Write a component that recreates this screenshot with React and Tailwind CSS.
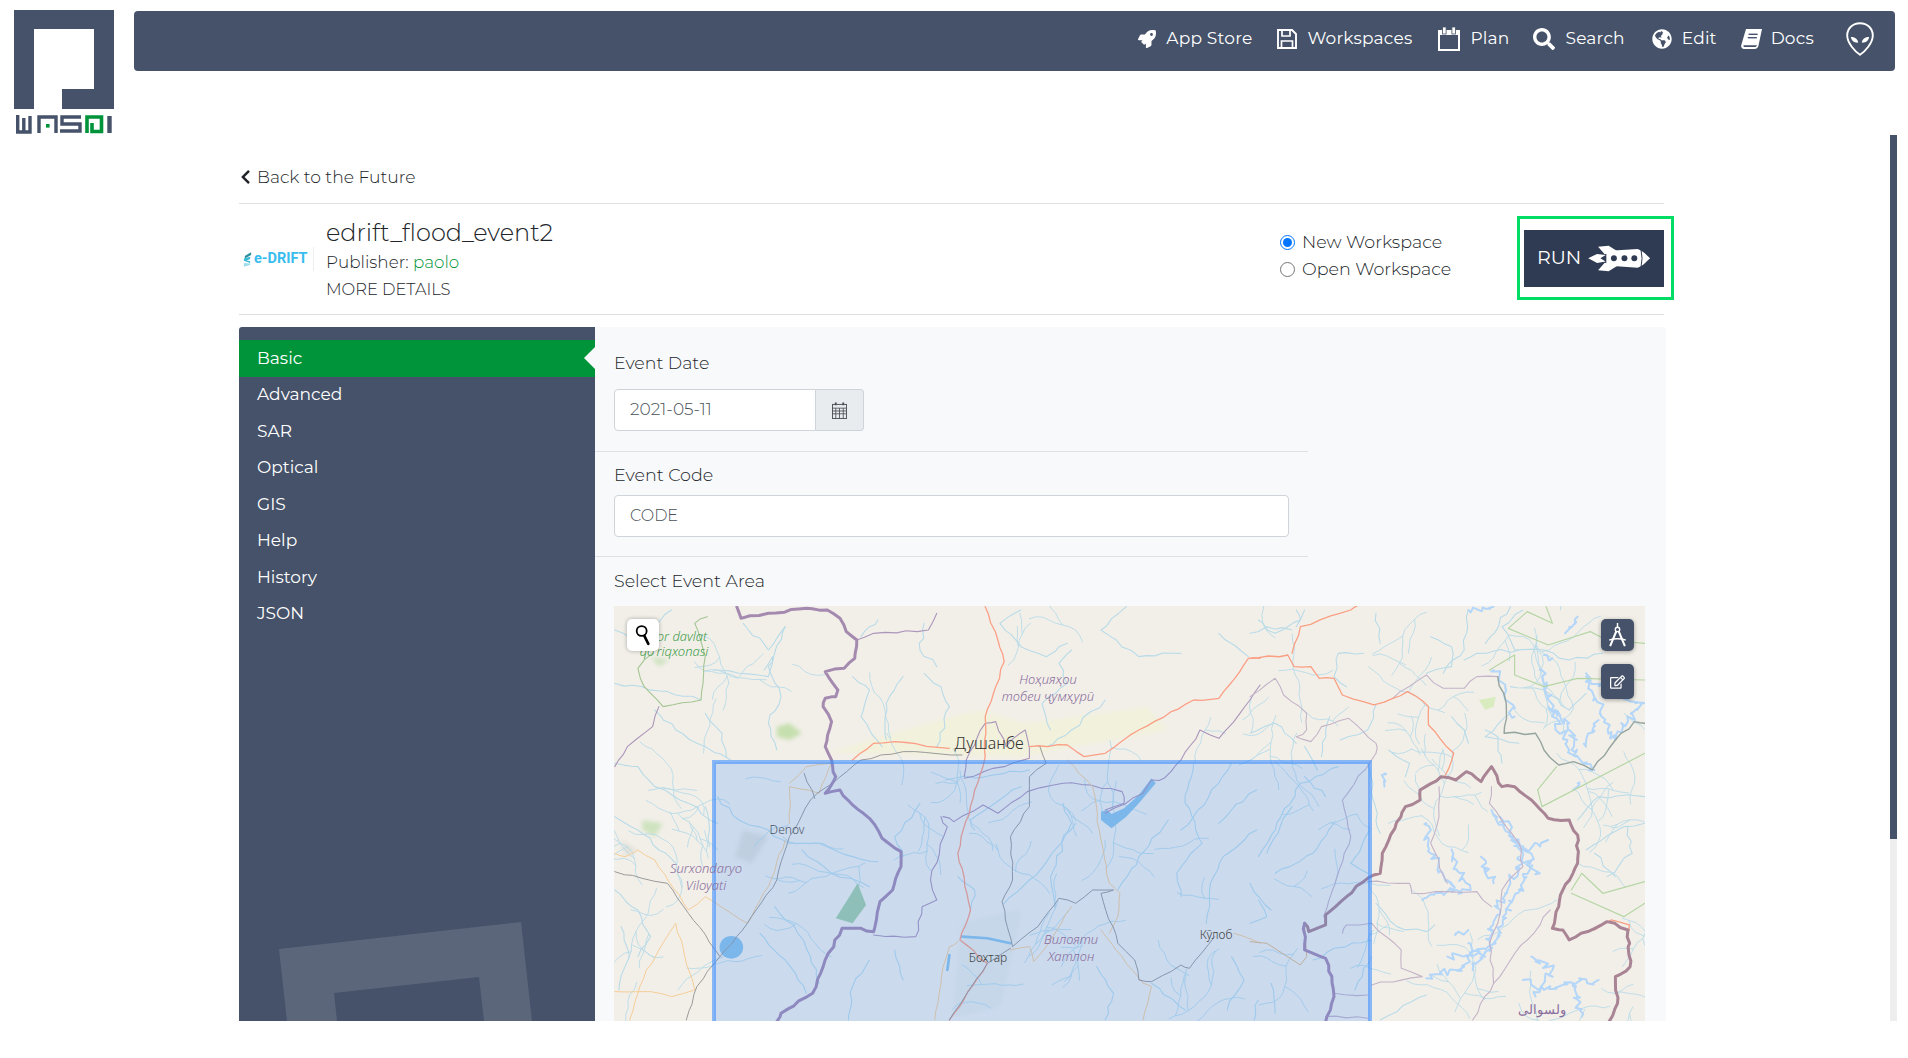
import React from "react";
import { FaRocket, FaSearch, FaGlobeAmericas, FaChevronLeft, FaRegEdit } from "react-icons/fa";

const font = { fontFamily: "Montserrat, Inter, 'Noto Sans', sans-serif" };

function Logo() {
  return (
    <svg viewBox="0 0 100 124" className="w-[100px] h-[124px] block shrink-0">
      <path d="M0 0H100V99H48V79H80V19H20V99H0Z" fill="#455269" />
      <g fill="none" stroke="#455269" strokeWidth="3.4">
        <path d="M3.7 105V122H16V106M9.8 122V108" />
        <path d="M25 123V107H42V123" />
        <path d="M67 107H48V114H66V121H46" />
        <path d="M95.5 106V123" strokeWidth="4.4" />
      </g>
      <rect x="32" y="114" width="3.6" height="3.6" fill="#00943a" />
      <path d="M73 123V107H87.5V121.5H78V113" fill="none" stroke="#00943a" strokeWidth="3.6" />
    </svg>
  );
}

function Book({ className }) {
  return (
    <svg viewBox="0 0 22 20" className={className} fill="white">
      <path d="M5 0H21L17.5 16.5C17 18.6 15.8 20 13.5 20H3C1 20 -.3 18.3 .3 16Z" />
      <path d="M2.5 16.2C2.2 17.2 2.8 18 3.8 18H13.8C15 18 15.6 17.3 16 16.2Z" fill="#455269" />
      <rect x="7.6" y="4.6" width="9" height="1.4" fill="#455269" />
      <rect x="6.8" y="8" width="9" height="1.4" fill="#455269" />
    </svg>
  );
}

function Alien() {
  return (
    <svg viewBox="0 0 28 34" className="w-[28px] h-[34px]">
      <path d="M14 1.2C6.5 1.2 1.2 6.5 1.2 13.5 1.2 21 9 29.5 14 32.8 19 29.5 26.8 21 26.8 13.5 26.8 6.5 21.5 1.2 14 1.2Z" fill="none" stroke="white" strokeWidth="1.9" />
      <path d="M4.8 15C8.6 14.6 11.8 17 12.2 20.6 8.4 21 5.4 18.8 4.8 15Z M23.2 15C19.4 14.6 16.2 17 15.8 20.6 19.6 21 22.6 18.8 23.2 15Z" fill="white" />
    </svg>
  );
}

function Floppy() {
  return (
    <svg viewBox="0 0 20 20" className="w-[20px] h-[20px]" fill="none" stroke="white" strokeWidth="1.9">
      <path d="M1 1H15L19 5V19H1Z" />
      <path d="M5 1V7H13V1" strokeWidth="1.7" />
      <path d="M4.5 19V12H15.5V19" strokeWidth="1.7" />
    </svg>
  );
}

function Cal() {
  return (
    <svg viewBox="0 0 22 24" className="w-[22px] h-[24px]">
      <rect x="1" y="4" width="20" height="19" fill="none" stroke="white" strokeWidth="2" />
      <rect x="1" y="4" width="20" height="4" fill="white" />
      <rect x="4.5" y="0" width="3.6" height="7" fill="white" stroke="#455269" strokeWidth=".8" />
      <rect x="13.9" y="0" width="3.6" height="7" fill="white" stroke="#455269" strokeWidth=".8" />
    </svg>
  );
}

function Compass() {
  return (
    <svg viewBox="0 0 20 26" className="w-[19px] h-[24px]" fill="none" stroke="white">
      <path d="M10 0V4.5" strokeWidth="1.6" />
      <circle cx="10" cy="7" r="2.4" strokeWidth="1.5" />
      <path d="M8.6 9.2 2 25M11.4 9.2 18 25" strokeWidth="2.2" />
      <path d="M1 18.5C6 16.5 14 16.5 19 18.5" strokeWidth="1.5" />
    </svg>
  );
}

function NavItem({ icon, label, gap = "gap-[10px]", extra = "" }) {
  return (
    <div className={`flex items-center ${gap} ${extra}`}>
      {icon}
      <span className="text-[17px] text-white tracking-[0.2px]">{label}</span>
    </div>
  );
}

function Navbar() {
  return (
    <div className="ml-[20px] mt-[1px] w-[1761px] h-[60px] bg-[#455269] rounded-[4px] flex items-center justify-end gap-[25px] pr-[21px] pb-[4px]">
      <NavItem icon={<FaRocket className="w-[18px] h-[18px] text-white" />} label="App Store" />
      <NavItem icon={<Floppy />} label="Workspaces" />
      <NavItem icon={<Cal />} label="Plan" extra="ml-[1px]" />
      <NavItem icon={<FaSearch className="w-[22px] h-[22px] text-white" />} label="Search" extra="ml-[-1px]" />
      <NavItem icon={<FaGlobeAmericas className="w-[20px] h-[20px] text-white" />} label="Edit" extra="ml-[2px]" />
      <NavItem icon={<Book className="w-[22px] h-[20px]" />} label="Docs" gap="gap-[8px]" extra="ml-[-1px]" />
      <div className="ml-[7px]"><Alien /></div>
    </div>
  );
}

function RunRocket() {
  return (
    <svg viewBox="235 110 190 82" className="w-[63px] h-[27px]">
      <path d="M290 128 385 122C400 128 408 136 413 141L423 150 413 159C408 165 400 173 385 179L290 172Z" fill="white" />
      <path d="M265 115 297 112 325 130 285 138Z M265 187 297 190 325 172 285 164Z" fill="white" />
      <path d="M235 150 262 137 288 140 272 150 288 160 262 165Z" fill="white" />
      <circle cx="313" cy="150" r="9" fill="#2f3b52" />
      <circle cx="345" cy="150" r="9" fill="#2f3b52" />
      <circle cx="375" cy="150" r="9" fill="#2f3b52" />
      <path d="M395 122Q402 150 395 180" stroke="#2f3b52" strokeWidth="3" fill="none" />
    </svg>
  );
}

function TitleRow() {
  return (
    <div className="h-[111px] border-b border-[#dfdfdf] flex items-center">
      <div className="w-[71px] ml-[4px] mr-[12px] h-[24px] flex items-center gap-[2px] border-r border-[#eeeeee]">
        <svg viewBox="0 0 10 16" className="w-[9px] h-[15px] shrink-0">
          <path d="M2 4 9 0V3L2 7Z" fill="#2a8f9c" />
          <path d="M1 7 8 5V7.5L4 9 8 10V12L1 9.5Z" fill="#38b9d8" />
          <path d="M1 12 8 12.5V14L1 16Z" fill="#9fdcee" />
        </svg>
        <span className="text-[14.5px] font-bold text-[#38bdee]" style={{ fontFamily: "Roboto, sans-serif" }}>e-DRIFT</span>
      </div>
      <div className="flex flex-col pt-[2px]">
        <div className="text-[24px] leading-[30px] font-light text-[#212529] mt-[-2px]">edrift_flood_event2</div>
        <div className="text-[16.8px] leading-[24px] font-light text-[#212529] mt-[2px]">Publisher: <span className="text-[#00943a]">paolo</span></div>
        <div className="text-[16.3px] leading-[24px] font-light text-[#212529] mt-[3px]">MORE DETAILS</div>
      </div>
      <div className="flex-1" />
      <div className="flex flex-col gap-[4px] mr-[67px] w-[170px] mb-[7px] shrink-0">
        <label className="flex items-center gap-[7px] h-[23px] text-[17.5px] font-light text-[#212529] whitespace-nowrap">
          <span className="w-[15px] h-[15px] rounded-full border border-[#0075ff] flex items-center justify-center shrink-0"><span className="w-[9px] h-[9px] rounded-full bg-[#0075ff]" /></span>
          New Workspace
        </label>
        <label className="flex items-center gap-[7px] h-[23px] text-[17.5px] font-light text-[#212529] whitespace-nowrap">
          <span className="w-[15px] h-[15px] rounded-full border border-[#767676] shrink-0" />
          Open Workspace
        </label>
      </div>
      <div className="mr-[-10px] mb-[2px] border-[3px] border-[#00dc64] w-[157px] h-[84px] pl-[4px] pt-[11px] shrink-0">
        <div className="w-[140px] h-[57px] bg-[#2f3b52] flex items-center pl-[13px] gap-[7px]">
          <span className="text-[19px] text-white">RUN</span>
          <RunRocket />
        </div>
      </div>
    </div>
  );
}

const menu = ["Basic", "Advanced", "SAR", "Optical", "GIS", "Help", "History", "JSON"];

function Sidebar() {
  return (
    <div className="relative w-[356px] shrink-0 bg-[#455269] rounded-tl-[3px] pt-[13px] overflow-hidden">
      <svg className="absolute left-0 top-0 w-[356px] h-[694px]" viewBox="0 0 356 694">
        <path fillRule="evenodd" d="M40 622 282 595 293 694H48ZM95 666 240 650 245 694H98Z" fill="#5b667b" />
      </svg>
      {menu.map((m, i) => (
        <div key={m} className={`relative h-[36.5px] flex items-center pl-[18px] text-[17px] text-white ${i === 0 ? "bg-[#00943a]" : ""}`}>
          {m}
          {i === 0 && <span className="absolute right-0 top-[7px] w-0 h-0 border-y-[11px] border-y-transparent border-r-[11px] border-r-[#f8f9fa]" />}
        </div>
      ))}
    </div>
  );
}

// Polylines written in the two map crops' coordinates
const A = {
  riv: [
    "M35 120 80 150 130 110 170 60", "M35 280 100 290 240 330", "M130 360 180 420 250 470 310 510", "M35 520 90 530 130 590 210 640 280 700",
    "M250 370 290 430 300 500", "M340 100 400 180 440 110", "M270 240 330 250 400 260 410 200 390 240", "M440 110 400 230 430 320 400 400 420 480",
    "M600 260 640 300 620 380 670 470", "M660 90 640 110 620 140", "M720 260 680 340 680 450", "M770 250 810 290 830 350 800 470", "M770 100 760 180 800 230",
    "M1000 60 950 100 1000 170 1060 200 1110 160", "M1120 180 1090 220 1110 280 1050 340 1070 420", "M1200 330 1120 420 1060 470",
    "M1250 50 1190 120 1280 200 1380 190", "M1470 130 1540 200", "M35 680 90 720 140 780 180 820", "M35 900 90 960 120 1040 90 1100", "M50 1010 70 1100 45 1200",
    "M250 650 260 770", "M280 620 330 690 400 720 450 760 520 760 600 800 660 815", "M480 780 550 850 640 890", "M415 950 470 1030 500 1100 520 1180",
    "M380 1030 440 1110 470 1170 490 1210", "M760 640 700 740 720 800", "M820 570 1020 540", "M1000 590 880 690 890 720", "M1100 640 1120 700 1070 860 1080 950",
    "M1130 700 1020 870 960 940", "M1350 690 1280 800 1230 900", "M1410 520 1390 640 1430 760 1370 850 1380 920", "M1500 520 1420 660 1380 720",
    "M1560 600 1500 660 1470 700", "M1560 720 1480 800 1450 880 1440 1000", "M590 1290 600 1190 640 1110", "M1180 1130 1220 1210 1200 1290", "M1500 1100 1530 1170 1490 1260",
    "M1310 1180 1390 1260", "M850 860 890 900 880 960", "M700 1080 720 1170",
  ],
  lake: ["M860 1040 920 1045 975 1060", "M830 1095 825 1140"],
  thinPurple: [
    "M610 150 650 130 780 120 800 70", "M35 530 65 470 125 410 140 350", "M1568 285 1520 370 1470 445 1425 420 1380 510 1340 565 1310 570 1290 610 1200 670",
    "M865 560 870 510 915 400 940 395 965 470 1010 420 1020 505 960 530 865 565", "M815 680 840 695 910 645 945 670 1015 605 1100 580 1165 585 1240 605 1245 640 1200 660",
    "M810 680 825 710 785 870 800 930 765 950 750 1040 650 1035",
  ],
  border: "M325 50 335 85 400 70 490 55 540 60 570 85 585 125 610 150 605 205 580 235 535 245 565 300 560 320 535 325 530 350 550 395 535 470 550 510 560 560 535 610 570 600 600 645 640 685 670 745 715 785 715 830 695 900 665 935 650 1025 620 1015 575 1015 530 1130 505 1210 430 1270 420 1295",
  green: "M255 80 225 100 250 200 240 330 150 350 105 290 90 235 125 190",
  red: ["M600 510 650 460 700 455 830 475", "M1020 470 1110 465 1150 500 1200 490 1280 420 1410 330 1470 325 1540 205 1568 205", "M915 50 945 150 960 215 940 290 915 380 915 500 890 600 850 790 880 960 855 1050 920 1120 830 1290"],
  orange: ["M35 790 60 800 90 780 130 810 210 960 250 920 350 1000 400 890 440 750", "M35 1205 120 1205 170 1220 225 1200 180 1000 110 1140 90 1210 70 1290", "M1110 510 1170 590 1190 750 1210 880 1235 910 1230 980 1210 1030", "M975 1080 1020 1070 1030 1115 1060 1070 1120 950", "M1190 1020 1240 1100 1290 1180 1310 1190 1290 1290", "M1505 1030 1568 1060", "M850 1055 830 1070 815 1130 795 1290", "M450 580 490 530 550 520 520 610 450 590 450 700"],
  road: ["M35 845 100 865 160 880 210 970 285 1100 350 1000 420 870 450 740 500 630 620 510 720 485 860 495", "M285 1100 230 1190 205 1290", "M485 550 510 625", "M1045 470 1060 520 1020 560 1020 650 975 740 980 870 955 935 980 1070 1040 1010 1090 925 1130 940 1170 900 1220 900 1190 910 1230 1060 1270 1110 1280 1170 1310 1175 1380 1125 1400 1135 1460 1040", "M975 1075 920 1120 830 1290"],
};
const B = {
  riv: [
    "M20 90 60 130 120 90 110 60", "M0 130 40 110 100 120", "M130 60 110 110", "M270 190 210 190 200 260 230 290", "M430 140 480 170 480 230 420 250", "M300 70 310 160", "M520 60 510 180 460 250",
    "M650 60 600 110 630 180 700 180 760 210 840 190", "M640 180 540 190 510 210", "M620 50 560 160", "M700 300 760 360 800 310", "M620 290 700 300 720 380", "M480 380 510 420 520 460", "M620 370 560 440 640 460",
    "M600 520 590 440 560 420", "M330 480 380 520 370 560", "M280 520 310 730", "M0 430 60 400 110 460", "M190 380 170 500", "M300 345 280 420 215 450", "M130 470 160 540",
    "M210 530 120 580 60 720 20 800", "M130 560 180 620", "M100 650 40 790", "M200 700 150 790 60 850", "M285 720 240 820 280 850", "M300 940 350 1010 420 1025 440 1005", "M800 780 890 710 940 700", "M820 790 870 860",
    "M900 710 910 790 850 860", "M780 690 830 620 940 620", "M290 1050 200 1075 150 1110", "M0 1000 40 980 20 930", "M310 1290 420 1215", "M50 1180 60 1270", "M20 1230 10 1290", "M0 880 50 960",
    "M290 1100 250 1200",
  ],
  thinPurple: [
    "M0 320 60 265 80 315 135 370 135 420 110 440 145 455 170 410 235 385 300 460 300 490 220 630 240 740 175 980", "M340 325 420 255 460 295 510 295 540 260 590 260",
    "M280 875 380 880 385 910 470 905 540 905 575 950", "M290 1000 360 1080 360 1135 410 1160 290 1185", "M200 1210 280 1215", "M450 590 450 680 430 760 470 880", "M575 590 570 640 640 760 650 830 600 900 590 1000 570 1060 580 1180 530 1290", "M715 960 580 1180", "M220 1030 230 1005 290 1000",
    "M180 1280 280 1285",
  ],
  grayGreen: "M590 260 610 340 605 430 680 430 700 480 735 525 770 515 815 540 870 450 915 395 940 400",
  green: ["M660 65 615 115 710 165 810 125 850 150 940 160", "M570 240 630 195 630 255 700 290 780 265 940 270", "M660 65 720 100 705 50", "M685 600 695 650 940 490", "M685 600 730 530", "M765 900 790 850 840 910 940 875", "M765 910 890 980 940 940"],
  orange: ["M0 205 90 195 105 230 145 230 165 265 200 265 220 315 295 345 340 325 375 305 425 350 425 405 485 490 465 555", "M100 190 120 110 240 60 255 48", "M820 1020 860 990 903 1005 903 1020"],
  border: "M130 1000 140 1025 180 1005 180 975 230 920 280 865 310 850 315 790 345 715 370 650 405 630 405 600 455 560 490 570 515 545 550 575 575 530 600 590 630 590 670 630 710 685 760 690 780 735 780 820 745 900 720 1015 745 1020 760 1050 850 995 900 1020 905 1130 870 1160 875 1240 855 1295",
  border2: "M130 1000 130 1080 180 1105 195 1160 200 1220 180 1295",
  tan: ["M0 1055 40 1060 120 1125 135 1100 130 1010"],
  snow: [
    "M580 240 610 300 630 380", "M420 700 430 790 470 870 480 900", "M480 780 500 850 520 900 440 910 410 930", "M575 660 620 730 650 790 620 880 590 950 570 1050 510 1130 420 1165", "M595 680 640 750 670 810 640 900 610 970 585 1060 530 1140", "M550 800 580 880", "M640 800 690 850", "M650 780 710 750", "M520 1060 560 1100",
    "M690 240 720 360 760 480 820 540", "M710 350 760 400 780 500", "M800 250 870 450 930 340", "M830 390 800 470", "M940 340 880 310 800 260", "M670 1100 720 1140 680 1220", "M650 1170 700 1200 770 1180 830 1170", "M770 1190 790 1280", "M470 1100 540 1080", "M490 1030 520 1020",
    "M580 50 520 60", "M780 80 750 130", "M700 195 720 205", "M320 550 320 590", "M780 580 770 600",
  ],
};

function rng(seed) {
  let r = seed;
  return () => {
    r = (r * 9301 + 49297) % 233280;
    return r / 233280;
  };
}

function wiggle(d, seed, amp = 1, step = 9) {
  const n = d.replace("M", "").trim().split(/\s+/).map(Number);
  const rand = rng(seed * 97 + 13);
  let out = "";
  for (let i = 0; i + 3 < n.length; i += 2) {
    const [x0, y0, x1, y1] = [n[i], n[i + 1], n[i + 2], n[i + 3]];
    const steps = Math.max(2, Math.round(Math.hypot(x1 - x0, y1 - y0) / step));
    for (let s = 0; s <= steps; s++) {
      const j = (rand() - 0.5) * 17 * amp;
      const k = (rand() - 0.5) * 20 * amp;
      const edge = s === 0 || s === steps ? 0 : 1;
      out += `${out ? "L" : "M"}${(x0 + (x1 - x0) * s / steps + j * edge).toFixed(1)} ${(y0 + (y1 - y0) * s / steps + k * edge).toFixed(1)}`;
    }
  }
  return out;
}

// Fine stream network over the whole map, in map pixels
const streams = (() => {
  const rand = rng(4711);
  const out = [];
  const walk = (x, y, a, n) => {
    let d = `M${x.toFixed(1)} ${y.toFixed(1)}`;
    for (let i = 0; i < n; i++) {
      a += (rand() - 0.5) * 1.0;
      x += Math.cos(a) * 7;
      y += Math.sin(a) * 7;
      d += `L${x.toFixed(1)} ${y.toFixed(1)}`;
      if (n > 5 && rand() < 0.12) walk(x, y, a + (rand() < 0.5 ? 0.9 : -0.9), Math.floor(n / 2));
    }
    out.push(d);
  };
  for (let i = 0; i < 95; i++) walk(rand() * 1031, rand() * 415, rand() * 6.28, 5 + Math.floor(rand() * 9));
  return out;
})();

function P({ d, c, w, o = 1 }) {
  return <path d={d} fill="none" stroke={c} strokeWidth={w} strokeOpacity={o} strokeLinejoin="round" strokeLinecap="round" vectorEffect="non-scaling-stroke" />;
}

function MapLabel({ x, y, s = 13, c = "#8a6d9c", i = true, t }) {
  return <text x={x} y={y} textAnchor="middle" fontSize={s} fill={c} fontStyle={i ? "italic" : "normal"} fontFamily="'Noto Sans', 'DejaVu Sans', sans-serif">{t}</text>;
}

function MapArt() {
  const riv = "#b9dbe8";
  return (
    <svg className="absolute left-0 top-0 w-[1031px] h-[415px]" viewBox="0 0 1031 415">
      <defs>
        <filter id="soft"><feGaussianBlur stdDeviation="0.55" /></filter>
        <filter id="patch"><feGaussianBlur stdDeviation="2.2" /></filter>
        <filter id="lake"><feGaussianBlur stdDeviation="1" /></filter>
      </defs>
      <rect width="1031" height="415" fill="#f2efe9" />
      <g filter="url(#patch)">
        <g transform="translate(-14,-16) scale(.421,.3333)">
          <path d="M540 490C660 440 800 390 900 360L1010 400 1300 350 1350 420 1000 500Z" fill="#f1f1dc" />
          <path d="M420 410 450 400 480 430 450 450 420 440Z" fill="#c6dfae" />
          <path d="M100 690 150 700 130 740 100 720Z M120 200 165 210 140 230Z" fill="#cfe3c0" />
          <path d="M860 1000 1000 960 950 1250 840 1280Z" fill="#dfe4dc" fillOpacity=".4" />
          <path d="M50 750 90 780 60 800Z M340 720 400 740 360 820 320 800Z" fill="#d8d8cf" fillOpacity=".6" />
        </g>
      </g>
      <g filter="url(#soft)">
        {streams.map((d, i) => <P key={i} d={d} c={riv} w={0.9} />)}
        <g transform="translate(-14,-16) scale(.421,.3333)">
          {A.riv.map((d, i) => <P key={i} d={wiggle(d, i + 3, 0.55, 22)} c={riv} w={1.1} />)}
          {A.lake.map((d, i) => <P key={i} d={d} c="#8fc3e6" w={2.6} />)}
          <g filter="url(#lake)">
            <path d="M1310 565 1320 580 1280 640 1250 680 1215 715 1190 690 1190 665 1205 660 1215 672 1245 655 1280 615Z" fill="#8fc3e6" />
            <ellipse cx="312" cy="1072" rx="28" ry="34" fill="#8fc3e8" />
            <path d="M612 880 632 945 600 1000 560 985 590 925Z" fill="#a6cfa8" />
          </g>
          {A.thinPurple.map((d, i) => <P key={i} d={wiggle(d, i + 20, 0.4, 26)} c="#ac96ba" w={1.1} />)}
          <P d={wiggle(A.green, 31, 0.35, 26)} c="#a5c593" w={1.1} />
          {A.orange.map((d, i) => <P key={i} d={wiggle(d, i + 40, 0.3, 26)} c="#f5cd97" w={1} />)}
          {A.red.map((d, i) => <P key={i} d={wiggle(d, i + 50, 0.3, 24)} c="#fb9f86" w={1.3} />)}
          {A.road.map((d, i) => <P key={i} d={wiggle(d, i + 60, 0.3, 26)} c="#9a9a9a" w={1} />)}
          <P d={wiggle(A.border, 70, 0.35, 20)} c="#a58ab0" w={3} />
        </g>
        <g transform="translate(636,-16) scale(.42,.3333)">
          {B.riv.map((d, i) => <P key={i} d={wiggle(d, i + 80, 0.55, 22)} c={riv} w={1.1} />)}
          {B.snow.map((d, i) => <P key={i} d={wiggle(d, i + 1, 1.2, 8)} c="#b4d6f8" w={2} />)}
          <path d="M545 330 585 320 580 350 560 360Z" fill="#d9ecc0" />
          {B.thinPurple.map((d, i) => <P key={i} d={wiggle(d, i + 120, 0.4, 26)} c="#c4b4c8" w={1.1} />)}
          {B.green.map((d, i) => <P key={i} d={d} c="#b7d6a6" w={1.2} />)}
          <P d={wiggle(B.grayGreen, 133, 0.4, 24)} c="#95a49e" w={1.4} />
          {B.orange.map((d, i) => <P key={i} d={wiggle(d, i + 140, 0.3, 24)} c="#fa9f82" w={1.3} />)}
          {B.tan.map((d, i) => <P key={i} d={d} c="#e0b98a" w={1} />)}
          <P d={wiggle(B.border, 150, 0.35, 18)} c="#a98494" w={3} />
          <P d={wiggle(B.border2, 151, 0.35, 18)} c="#a58ab0" w={3} />
        </g>
      </g>
      <rect x="100" y="156" width="656" height="290" fill="#3388ff" fillOpacity=".2" stroke="#3388ff" strokeOpacity=".55" strokeWidth="4" />
      <MapLabel x={68} y={35} s={13} c="#3f9e4a" t="or davlat" />
      <MapLabel x={60} y={50} s={13} c="#3f9e4a" t="qo'riqxonasi" />
      <MapLabel x={434} y={78} t="Ноҳияҳои" />
      <MapLabel x={434} y={95} t="тобеи ҷумҳурӣ" />
      <MapLabel x={375} y={143} s={16} c="#333" i={false} t="Душанбе" />
      <MapLabel x={173} y={228} s={12} c="#4a5568" i={false} t="Denov" />
      <MapLabel x={92} y={267} t="Surxondaryo" />
      <MapLabel x={92} y={284} t="Viloyati" />
      <MapLabel x={374} y={356} s={12} c="#444" i={false} t="Бохтар" />
      <MapLabel x={457} y={338} t="Вилояти" />
      <MapLabel x={457} y={355} t="Хатлон" />
      <MapLabel x={602} y={333} s={12} c="#444" i={false} t="Кӯлоб" />
      <MapLabel x={928} y={408} s={13} i={false} t="ولسوالی" />
    </svg>
  );
}

function MapBlock() {
  return (
    <div className="relative w-[1031px] h-[415px] mt-[13px] overflow-hidden">
      <MapArt />
      <button className="absolute left-[13px] top-[13px] w-[32px] h-[32px] bg-white rounded-[5px] shadow-[0_0_4px_rgba(0,0,0,0.3)] flex items-center justify-center">
        <svg viewBox="0 0 18 24" className="w-[16px] h-[22px]"><circle cx="7.5" cy="7.5" r="5.6" fill="none" stroke="black" strokeWidth="2" /><path d="M10.5 13 15 22" stroke="black" strokeWidth="3" strokeLinecap="round" /></svg>
      </button>
      <button className="absolute right-[11px] top-[13px] w-[33px] h-[32px] bg-[#455269] rounded-[5px] shadow-[0_1px_4px_rgba(0,0,0,0.35)] flex items-center justify-center">
        <Compass />
      </button>
      <button className="absolute right-[11px] top-[58px] w-[33px] h-[35px] bg-[#455269] rounded-[5px] shadow-[0_1px_4px_rgba(0,0,0,0.35)] flex items-center justify-center">
        <FaRegEdit className="w-[15px] h-[14px] text-white" />
      </button>
    </div>
  );
}

function Main() {
  return (
    <div className="flex-1 bg-[#f8f9fa] rounded-tr-[3px] text-[#212529] font-light">
      <div className="w-[713px] h-[125px] border-b border-[#dfe1e4] pl-[19px] pt-[24px]">
        <div className="text-[17.4px] leading-[24px]">Event Date</div>
        <div className="flex mt-[14px] w-[250px] h-[42px]">
          <div className="w-[202px] bg-white border border-[#ced4da] rounded-l-[4px] flex items-center pl-[15px] text-[17px] text-[#495057]">2021-05-11</div>
          <div className="flex-1 bg-[#e9ecef] border border-l-0 border-[#ced4da] rounded-r-[4px] flex items-center justify-center">
            <svg viewBox="0 0 16 18" className="w-[15px] h-[17px]" fill="none" stroke="#495057">
              <rect x=".5" y="2.5" width="15" height="15" />
              <path d="M.5 6.5H15.5M.5 9.5H15.5M.5 12.5H15.5M4 6.5V17.5M8 6.5V17.5M12 6.5V17.5" strokeWidth=".9" />
              <path d="M4 .5V3.5M12 .5V3.5" strokeWidth="2" />
            </svg>
          </div>
        </div>
      </div>
      <div className="w-[713px] h-[105px] border-b border-[#dfe1e4] pl-[19px] pt-[11px]">
        <div className="text-[17.5px] leading-[24px]">Event Code</div>
        <div className="mt-[8px] w-[675px] h-[42px] bg-white border border-[#ced4da] rounded-[4px] flex items-center pl-[15px] text-[16px] text-[#495057]">CODE</div>
      </div>
      <div className="pl-[19px] pt-[12px]">
        <div className="text-[17.5px] leading-[24px]">Select Event Area</div>
        <MapBlock />
      </div>
    </div>
  );
}

export default function App() {
  return (
    <div className="w-[1908px] h-[1058px] bg-white overflow-hidden" style={font}>
      <div className="h-[135px] flex items-start pt-[10px] pl-[14px]">
        <Logo />
        <Navbar />
      </div>
      <div className="h-[886px] flex overflow-hidden">
        <div className="w-[1890px] pl-[239px] overflow-hidden">
          <div className="w-[1425px] h-[69px] border-b border-[#dfdfdf] flex items-center gap-[5px] pt-[16px]">
            <FaChevronLeft className="w-[13px] h-[16px] text-[#212529]" />
            <span className="text-[17.2px] font-light text-[#212529]">Back to the Future</span>
          </div>
          <div className="w-[1425px]"><TitleRow /></div>
          <div className="w-[1427px] h-[1000px] mt-[12px] flex">
            <Sidebar />
            <Main />
          </div>
        </div>
        <div className="w-[7px] h-full bg-[#eeeeee]">
          <div className="w-full h-[704px] bg-[#455269]" />
        </div>
      </div>
    </div>
  );
}
